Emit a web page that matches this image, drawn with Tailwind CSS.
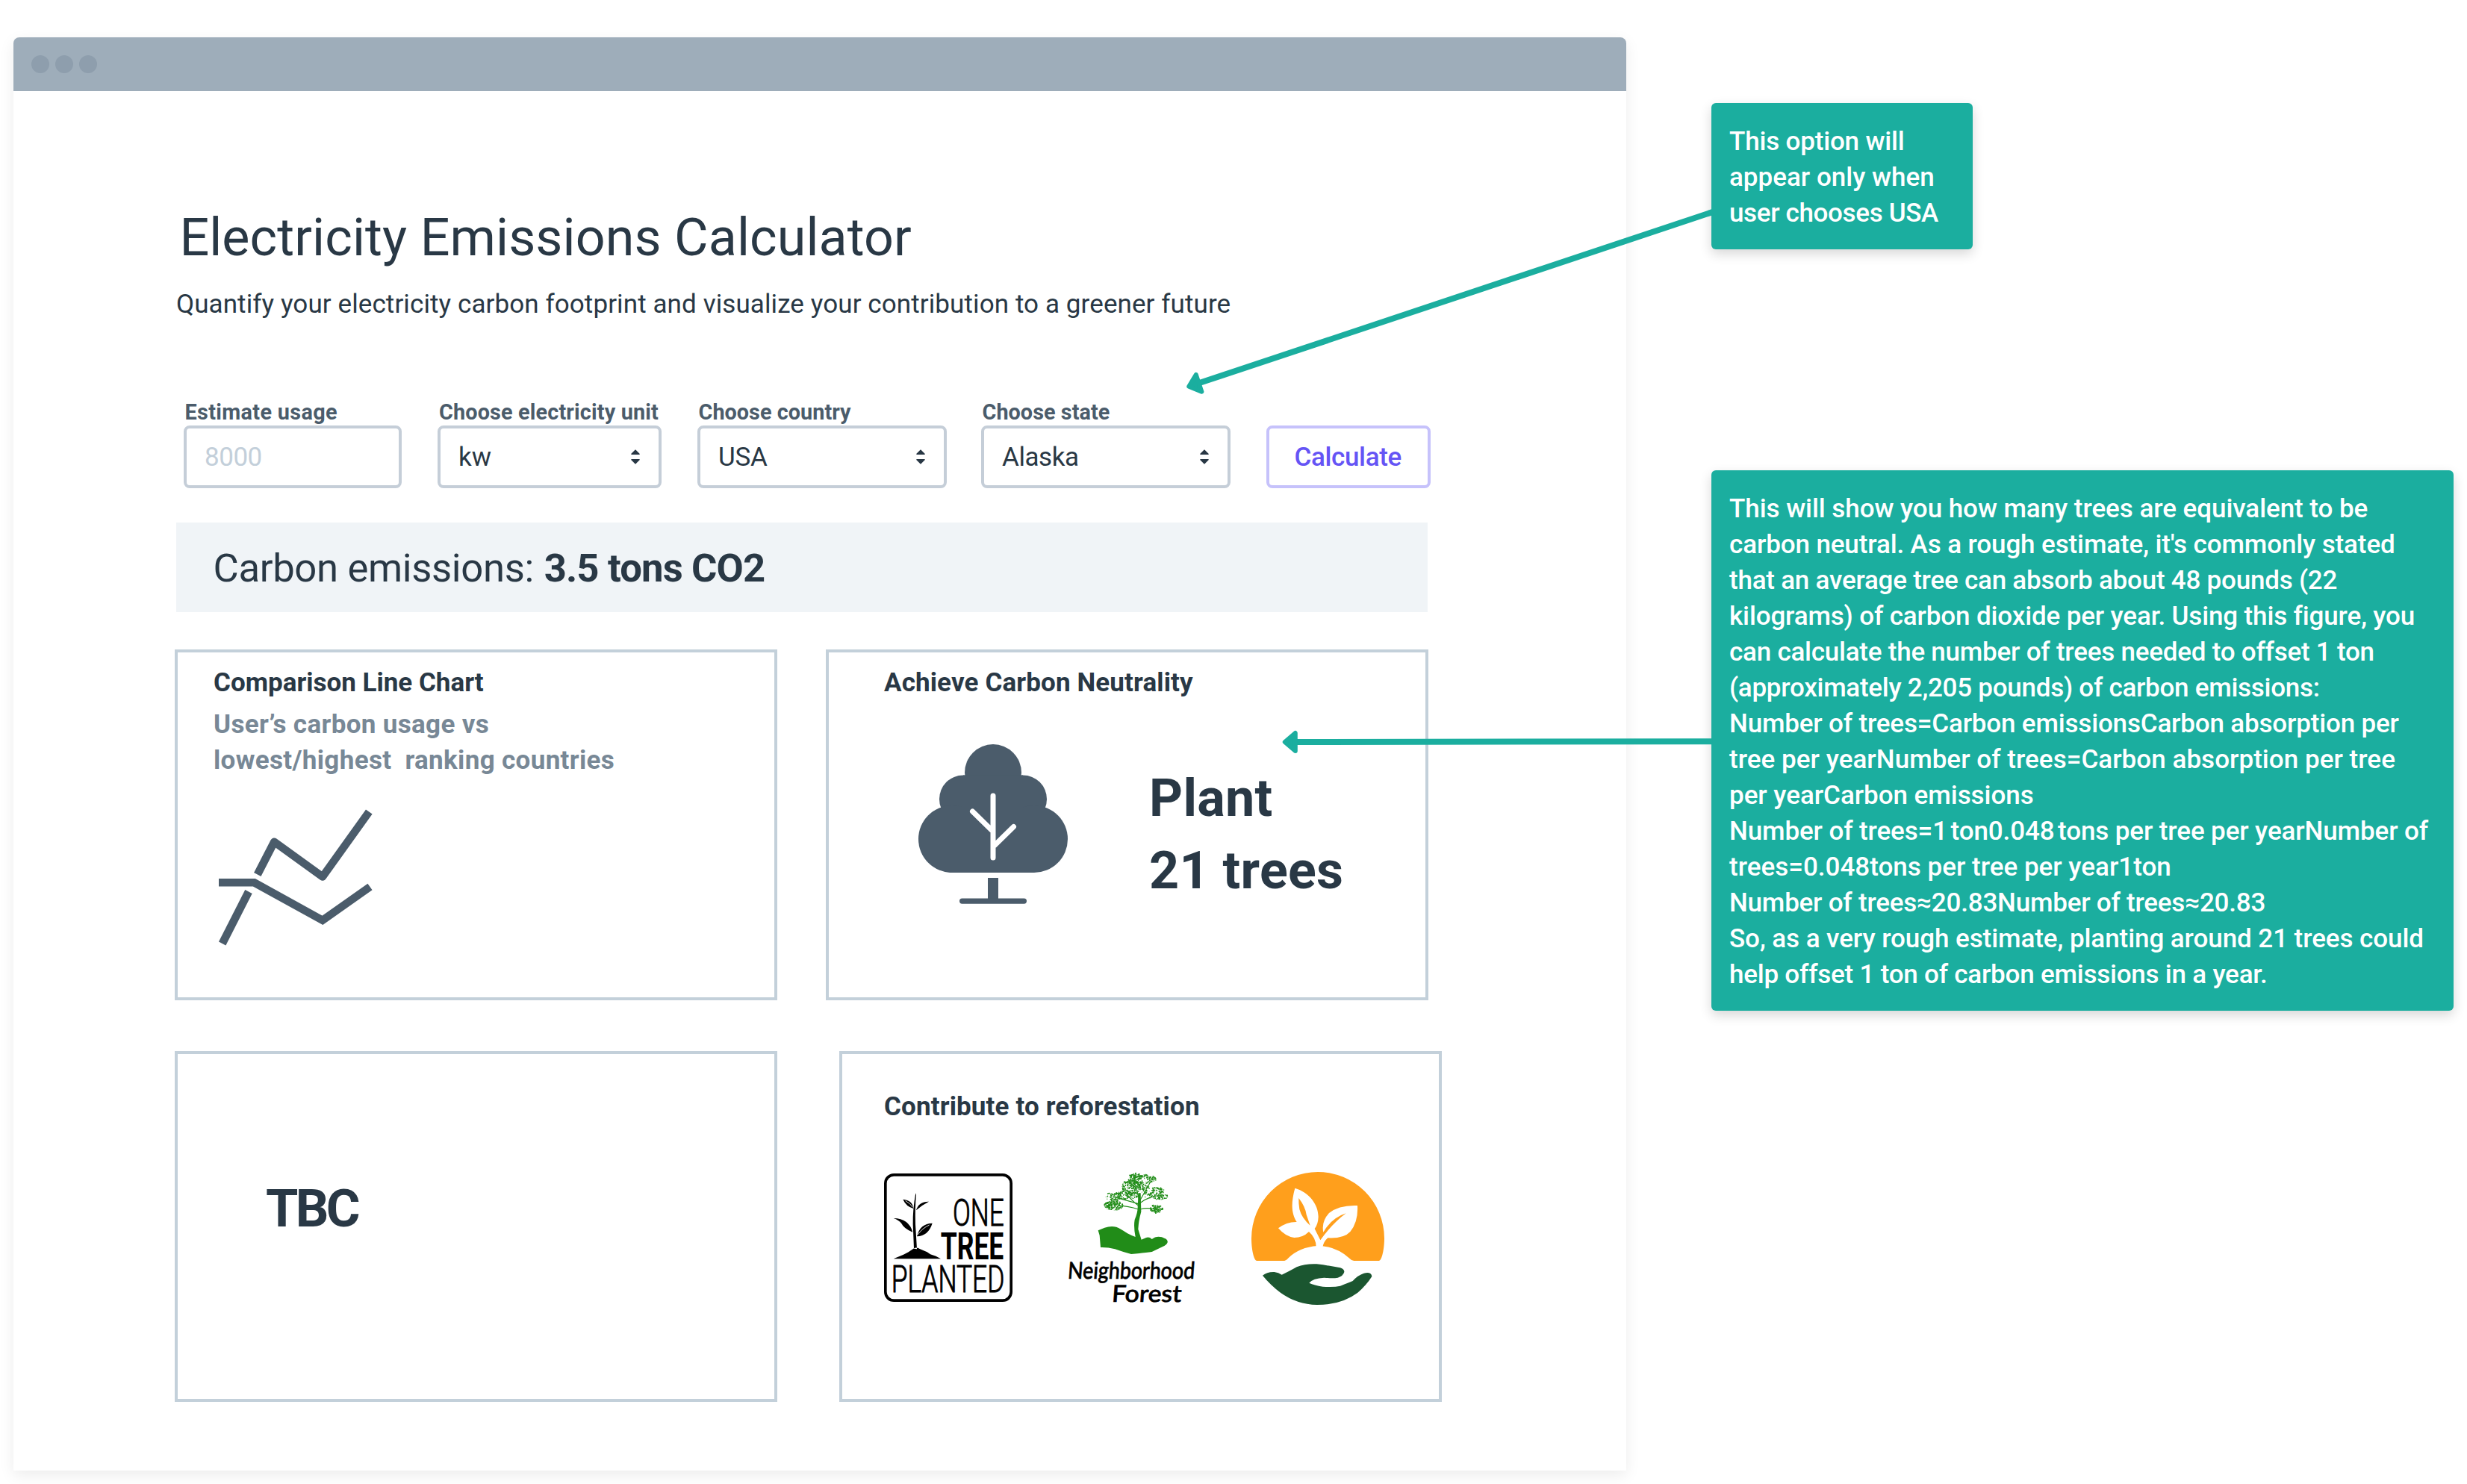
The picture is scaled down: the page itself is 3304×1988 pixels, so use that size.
<!DOCTYPE html>
<html lang="en">
<head>
<meta charset="utf-8">
<title>Electricity Emissions Calculator</title>
<script src="https://cdn.jsdelivr.net/npm/@tailwindcss/browser@4"></script>
</head>
<body class="bg-white font-['Roboto',sans-serif] text-[#293845]">
<div class="relative flex h-[1988px] w-[3304px] items-start overflow-hidden">

  <!-- Browser window -->
  <main class="mt-[50px] ml-[18px] h-[1920px] w-[2160px] shrink-0 overflow-visible rounded-t-lg bg-white shadow-[0_6px_20px_rgba(0,0,0,0.08)]">
    <div class="flex h-[72px] items-center gap-2 rounded-t-lg bg-[#9eadba] pl-6">
      <span class="size-6 rounded-full bg-[#8e9ead]"></span>
      <span class="size-6 rounded-full bg-[#8e9ead]"></span>
      <span class="size-6 rounded-full bg-[#8e9ead]"></span>
    </div>

    <div class="flex flex-col items-start pl-[216px] whitespace-nowrap">
      <h1 class="mt-[154px] ml-[6.4px] text-[70px] leading-[84px] tracking-[0.086px]">Electricity Emissions Calculator</h1>
      <p class="mt-6 ml-0.5 text-[35px] leading-[48px] tracking-[0.095px]">Quantify your electricity carbon footprint and visualize your contribution to a greener future</p>

      <!-- Form -->
      <div class="mt-[104px] ml-3 flex items-end text-[35px] leading-[48px]">
        <div class="w-[292px]">
          <div class="mb-0.5 pl-[1.5px] text-[28.8px] leading-8 font-bold tracking-[0.35px] text-[#4b5c6b]">Estimate usage</div>
          <div class="flex h-[84px] items-center rounded-lg border-4 border-[#c5ced8] pt-0.5 pl-6 tracking-[-0.47px] text-[#c3cfda]">8000</div>
        </div>
        <div class="ml-12 w-[300px]">
          <div class="mb-0.5 pl-0.5 text-[28.8px] leading-8 font-bold tracking-[0.158px] text-[#4b5c6b]">Choose electricity unit</div>
          <div class="flex h-[84px] items-center justify-between rounded-lg border-4 border-[#c5ced8] pr-[25px] pl-6">
            <span class="pt-0.5">kw</span>
            <svg class="h-5 w-3" viewBox="0 0 12 20" fill="#293845" stroke="#293845" stroke-width="1.6" stroke-linejoin="round"><path d="M6 1.2 11 6.2H1ZM6 18.8 11 13.8H1Z"/></svg>
          </div>
        </div>
        <div class="ml-12 w-[334px]">
          <div class="mb-0.5 pl-[1.5px] text-[28.8px] leading-8 font-bold tracking-[0.035px] text-[#4b5c6b]">Choose country</div>
          <div class="flex h-[84px] items-center justify-between rounded-lg border-4 border-[#c5ced8] pr-[25px] pl-6">
            <span class="pt-0.5 tracking-[-0.238px]">USA</span>
            <svg class="h-5 w-3" viewBox="0 0 12 20" fill="#293845" stroke="#293845" stroke-width="1.6" stroke-linejoin="round"><path d="M6 1.2 11 6.2H1ZM6 18.8 11 13.8H1Z"/></svg>
          </div>
        </div>
        <div class="ml-[46px] w-[334px]">
          <div class="mb-0.5 pl-[1.5px] text-[28.8px] leading-8 font-bold tracking-[0.048px] text-[#4b5c6b]">Choose state</div>
          <div class="flex h-[84px] items-center justify-between rounded-lg border-4 border-[#c5ced8] pr-[25px] pl-6">
            <span class="pt-0.5 tracking-[-0.437px]">Alaska</span>
            <svg class="h-5 w-3" viewBox="0 0 12 20" fill="#293845" stroke="#293845" stroke-width="1.6" stroke-linejoin="round"><path d="M6 1.2 11 6.2H1ZM6 18.8 11 13.8H1Z"/></svg>
          </div>
        </div>
        <button class="ml-12 flex h-[84px] w-[220px] items-center rounded-lg border-4 border-[#c6c2fb] pt-0.5 pl-[33.5px] font-medium tracking-[-0.352px] text-[#6554f5]">Calculate</button>
      </div>

      <!-- Result -->
      <div class="mt-[46px] ml-0.5 flex h-[120px] w-[1676px] items-center bg-[#f0f4f7] pt-0.5 pl-[49.5px] text-[52.6px] leading-[64px]">
        <p class="tracking-[-0.334px]">Carbon emissions: <b class="ml-px tracking-[-0.85px]">3.5 tons CO2</b></p>
      </div>

      <div class="mt-[50px] flex gap-[65px]">
        <section class="h-[470px] w-[807px] border-4 border-[#c3d0da] pt-[17px] pl-12 text-[35px] leading-[48px] font-bold">
          <h2>Comparison Line Chart</h2>
          <p class="mt-2 tracking-[0.34px] text-[#788896]">User’s carbon usage vs<br>lowest/highest&nbsp; ranking countries</p>
          <svg class="mt-[41px] ml-[5px] h-[184px] w-[210px]" viewBox="291 1084 210 184" fill="none" stroke="#4b5c6b" stroke-width="10.6">
            <path stroke-linejoin="round" d="M494.3 1087.5 432 1174.5 367.3 1127.8 344.8 1171.5"/>
            <path d="M333 1194.5 297.7 1264"/>
            <path d="M293 1182.3H340.5L432 1232.8 495.5 1188"/>
          </svg>
        </section>

        <section class="h-[470px] w-[807px] border-4 border-[#c3d0da] pt-[17px] pl-[74px] font-bold">
          <h2 class="text-[35px] leading-[48px] tracking-[0.125px]">Achieve Carbon Neutrality</h2>
          <div class="mt-[57px] ml-[45px] flex items-start gap-[108px]">
            <svg class="h-[216px] w-[202px]" viewBox="1229 996 202 216">
              <g fill="#4b5c6b">
                <circle cx="1330" cy="1035" r="38"/>
                <circle cx="1290" cy="1070.5" r="32"/><circle cx="1370" cy="1070.5" r="32"/>
                <circle cx="1275" cy="1124" r="45"/><circle cx="1385" cy="1124" r="45"/>
                <path d="M1290 1038.5H1370V1169H1290ZM1275 1082H1385V1169H1275Z"/>
                <path d="M1323 1176H1337V1206H1323Z"/>
                <rect x="1285" y="1203.5" width="90" height="7.2" rx="3.6"/>
              </g>
              <path fill="none" stroke="#fff" stroke-width="7" stroke-linecap="round" d="M1330 1066V1149M1302.5 1087 1328 1112M1357.5 1107.500 1332 1132.500"/>
            </svg>
            <p class="mt-[24.5px] text-[70px] leading-[97px] tracking-[0.3px]">Plant<br>21 trees</p>
          </div>
        </section>
      </div>

      <div class="mt-[68px] flex gap-[83px]">
        <section class="h-[470px] w-[807px] border-4 border-[#c3d0da] pt-[165px] pl-[118px]">
          <h2 class="text-[70px] leading-[84px] font-bold tracking-[-3.7px]">TBC</h2>
        </section>

        <section class="h-[470px] w-[807px] border-4 border-[#c3d0da] pt-[47px] pl-[56px]">
          <h2 class="text-[35px] leading-[48px] font-bold tracking-[0.14px]">Contribute to reforestation</h2>
          <div class="mt-[62px] flex items-start">
            <!-- One Tree Planted -->
            <svg class="mt-[3px] h-[172px] w-[172px] overflow-visible" viewBox="72 96 516 516" font-family="Roboto, sans-serif">
              <rect x="77.500" y="101.500" width="505" height="505" rx="34" fill="none" stroke="#000" stroke-width="11"/>
              <path d="M199 175Q187 240 188 300L192 398 204 400 198 300Q196 230 201 182ZM148 200Q186 203 190 237Q160 228 148 200ZM252 209Q211 208 201 244Q224 223 252 209ZM110 276Q172 277 187 332Q152 318 142 297Q131 283 110 276ZM266 296Q216 297 204 349Q250 347 266 296ZM110 439 150 422 170 412 190 398Q203 391 215 399L245 412 258 421 280 428 300 439Z"/>
              <path fill="none" stroke="#fff" stroke-width="2.500" d="M206 343Q226 316 254 303M158 206Q178 216 187 232"/>
              <text x="348" y="306" font-size="148" font-weight="300" stroke="#000" stroke-width="3" textLength="206" lengthAdjust="spacingAndGlyphs">ONE</text>
              <text x="299" y="440" font-size="148" font-weight="700" textLength="254" lengthAdjust="spacingAndGlyphs">TREE</text>
              <text x="101" y="574" font-size="148" font-weight="300" stroke="#000" stroke-width="3" textLength="455" lengthAdjust="spacingAndGlyphs">PLANTED</text>
            </svg>
            <!-- Neighborhood Forest -->
            <svg class="mt-px ml-[74px] h-[177px] w-[174px] overflow-visible" viewBox="90 90 522 531" font-family="Lato, sans-serif">
              <g fill="#218c18">
                <path d="M212 325 238 314Q262 306 285 311 302 317 330 337 345 345 362 351 354 310 359 282 372 250 371 230L374 175H383L385 250Q374 290 373 320L386 362 405 354Q418 350 428 360 440 350 455 350 470 350 478 356 493 361 491 373 488 384 470 391L428 411Q400 415 345 420 310 411 280 400 250 392 222 393L218 345Z"/>
                <g id="leaves"></g>
              </g>
              <path fill="none" stroke="#218c18" stroke-width="3.500" d="M374 240Q330 225 290 226M374 225Q345 205 320 170M378 215Q372 160 350 115M380 205Q405 160 425 125M380 215Q420 185 465 185M381 240Q410 232 440 240M374 218Q330 205 275 190"/>
              <g font-size="94" font-weight="500" stroke="#000" stroke-width="2" transform="skewX(-4)">
                <text x="125" y="520" textLength="510" lengthAdjust="spacingAndGlyphs">Neighborhood</text>
                <text x="308" y="612" textLength="280" lengthAdjust="spacingAndGlyphs">Forest</text>
              </g>
            </svg>
            <!-- Sprout over open hand -->
            <svg class="ml-[71px] h-[180px] w-[180px]" viewBox="825 87 540 540">
              <path fill="#ff9f1c" d="M850 447C838 447 828 400 828 357A267 267 0 0 1 1362 357C1362 400 1352 447 1340 447H1240Q1230 446 1222 437 1165 387 1095 387 1020 392 975 437 967 447 955 447Z"/>
              <path fill="#fff" d="M1003 155C1060 172 1097 220 1097 270Q1096 300 1082 318L1105 364Q1150 300 1208 256 1150 275 1117 332 1108 290 1140 255 1180 222 1254 225 1258 290 1225 330 1200 358 1135 355 1118 370 1114 392H1088Q1088 355 1059 330 1035 354 1000 354 965 350 936 316 970 290 1010 291C990 260 985 220 1003 155Z"/>
              <path fill="#ff9f1c" d="M1018 195Q1045 230 1049 262L1064 305Q1030 275 1021 240 1017 215 1018 195Z"/>
              <path fill="#1b5630" d="M873 506Q890 491 920 492 937 494 950 503 975 492 1010 472 1045 458 1090 460 1140 466 1185 475 1202 481 1201 492 1197 508 1175 515 1155 518 1120 515 1075 517 1060 536 1080 545 1115 551 1160 554 1185 548 1220 535 1235 528 1255 505 1280 497 1310 490 1312 510 1290 545 1255 575 1190 624 1092 624 1010 622 945 575 905 545 873 506Z"/>
            </svg>
          </div>
        </section>
      </div>
    </div>
  </main>

  <!-- Notes -->
  <aside class="ml-[114px] flex flex-col items-start pt-[138px] text-[35px] leading-[48px] font-medium whitespace-nowrap text-white">
    <div class="h-[196px] w-[350px] rounded-md bg-[#1bae9f] pt-7 pl-6 shadow-[0_6px_16px_rgba(0,0,0,0.16)]">
      <p class="tracking-[-0.18px]">This option will</p>
      <p>appear only when</p>
      <p class="tracking-[-0.35px]">user chooses USA</p>
    </div>
    <div class="mt-[296px] h-[724px] w-[994px] rounded-md bg-[#1bae9f] pt-7 pl-6 shadow-[0_6px_16px_rgba(0,0,0,0.16)]">
      <p class="tracking-[-0.056px]">This will show you how many trees are equivalent to be</p>
      <p class="tracking-[-0.12px]">carbon neutral. As a rough estimate, it's commonly stated</p>
      <p class="tracking-[-0.225px]">that an average tree can absorb about 48 pounds (22</p>
      <p class="tracking-[-0.144px]">kilograms) of carbon dioxide per year. Using this figure, you</p>
      <p class="tracking-[-0.232px]">can calculate the number of trees needed to offset 1 ton</p>
      <p class="tracking-[-0.267px]">(approximately 2,205 pounds) of carbon emissions:</p>
      <p class="tracking-[-0.175px]">Number of trees=Carbon emissionsCarbon absorption per</p>
      <p class="tracking-[0.036px]">tree per yearNumber of trees=Carbon absorption per tree</p>
      <p class="tracking-[-0.04px]">per yearCarbon emissions</p>
      <p class="tracking-[-0.12px]">Number of trees=1<span class="-ml-1"> </span>ton0.048<span class="-ml-1"> </span>tons per tree per yearNumber of</p>
      <p>trees=0.048tons per tree per year1ton</p>
      <p class="tracking-[-0.22px]">Number of trees≈20.83Number of trees≈20.83</p>
      <p class="tracking-[-0.07px]">So, as a very rough estimate, planting around 21 trees could</p>
      <p class="tracking-[-0.223px]">help offset 1 ton of carbon emissions in a year.</p>
    </div>
  </aside>

  <!-- Connector arrows -->
  <svg class="absolute inset-0 h-[1988px] w-[3304px]" viewBox="0 0 3304 1988" fill="#1bae9f" stroke="#1bae9f" stroke-linejoin="round">
    <g transform="translate(1588.5 519) rotate(-18.43)">
      <path stroke-width="8" d="M18 0H743"/><path stroke-width="6" d="M4 0 18-12V12Z"/>
    </g>
    <g transform="translate(1716.8 994) rotate(-0.08)">
      <path stroke-width="8" d="M18 0H577"/><path stroke-width="6" d="M4 0 18-12V12Z"/>
    </g>
  </svg>
</div>

<script>
  // Scatter foliage inside each cluster: [cx, cy, rx, ry, count]
  const clusters = [[375,108,42,10,80],[345,150,38,30,210],[425,120,20,14,55],[325,183,50,18,130],[275,188,34,18,80],[275,225,38,20,150],[395,150,25,22,70],[450,165,28,14,70],[462,190,30,14,70],[447,238,26,17,110],[415,182,20,15,30],[260,222,22,12,45],[365,125,30,30,110]];
  let seed = 7;
  const rnd = () => (seed = (seed * 16807) % 2147483647) / 2147483647;
  let dots = '';
  for (const [cx, cy, rx, ry, n] of clusters)
    for (let i = 0; i < n; i++) {
      const a = rnd() * 6.283, d = Math.sqrt(rnd());
      dots += `<circle cx="${(cx + rx * d * Math.cos(a)).toFixed(1)}" cy="${(cy + ry * d * Math.sin(a)).toFixed(1)}" r="${(1 + rnd() * 2.2).toFixed(1)}"/>`;
    }
  document.getElementById('leaves').innerHTML = dots;
</script>
</body>
</html>
